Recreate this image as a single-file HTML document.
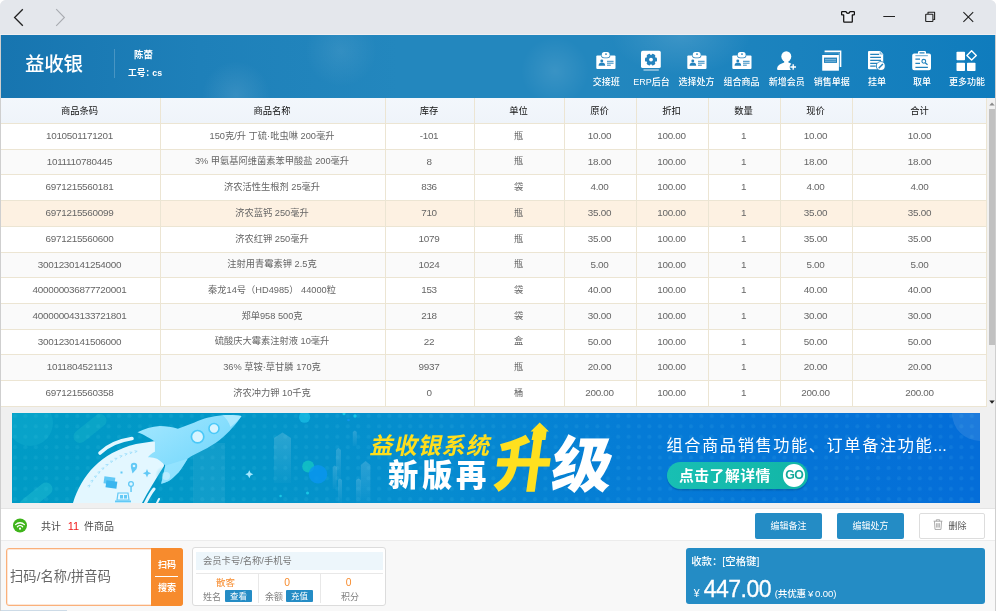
<!DOCTYPE html>
<html lang="zh-CN"><head><meta charset="utf-8"><title>益收银</title>
<style>
*{box-sizing:border-box;margin:0;padding:0}
html,body{width:997px;height:611px;overflow:hidden}
body{background:#fff;font-family:"Liberation Sans","Noto Sans CJK SC",sans-serif;position:relative;color:#666;font-size:9.3px}
.abs{position:absolute}
#win{position:absolute;left:0;top:0;width:996px;height:611px;background:#f0f0f0;border-radius:6px 6px 0 0;overflow:hidden;will-change:transform}
#tbar{position:absolute;left:0;top:0;width:996px;height:35px;background:#e4e7ec;border-bottom:1px solid #f0eff1}
#hdr{position:absolute;left:1px;top:35px;width:994px;height:63px;background:
 radial-gradient(circle 34px at 235px 60px,rgba(255,255,255,.10),rgba(255,255,255,0) 100%),
 radial-gradient(circle 36px at 340px 16px,rgba(255,255,255,.08),rgba(255,255,255,0) 100%),
 radial-gradient(circle 34px at 554px 36px,rgba(255,255,255,.10),rgba(255,255,255,0) 100%),
 radial-gradient(ellipse 70px 40px at 680px 0px,rgba(255,255,255,.13),rgba(255,255,255,0) 100%),
 linear-gradient(90deg,#1775b0 0%,#1e80b9 20%,#2387be 40%,#2387be 60%,#1a82be 80%,#0f7cbd 100%)}
.logo{position:absolute;left:24px;top:16px;color:#fff;font-size:19.5px;font-weight:500;line-height:26px;letter-spacing:-0.3px}
.vsep{position:absolute;left:113px;top:14px;width:1px;height:29px;background:rgba(255,255,255,.2)}
.uname{position:absolute;left:133px;top:13.5px;color:#fff;font-size:9.4px;line-height:12px;font-weight:700}
.uno{position:absolute;left:127px;top:32px;color:#fff;font-size:8.8px;line-height:12px;font-weight:700;white-space:nowrap}
.nav{position:absolute;top:0;width:46px;height:63px;text-align:center;color:#fff}
.nav svg{position:absolute;left:11px;top:13px;width:24px;height:24px}
.nav span{position:absolute;left:-10px;right:-10px;top:41.3px;font-size:9px;line-height:12px;white-space:nowrap;letter-spacing:0;font-weight:500}
#tbl{position:absolute;left:0;top:98px;width:995px;height:309px;background:#fff}
.thead{position:absolute;left:0;top:0;width:987px;height:26px;background:linear-gradient(#f3f7fc,#eff4fa);border-bottom:1px solid #ece5d3}
.th{position:absolute;top:0;height:25px;line-height:26.5px;text-align:center;color:#222;font-size:9.3px;border-right:1px solid #ece5d3;padding-right:2px;font-weight:400;color:#111}
.tr{position:absolute;left:0;width:987px;border-bottom:1px solid #ece5d3;background:#fff}
.tr.alt{background:#fafafa}
.tr.sel{background:#fdf1e2}
.td{position:absolute;top:0;height:100%;text-align:center;border-right:1px solid #ece5d3;white-space:nowrap;font-size:9.9px;letter-spacing:-.28px;padding-right:2px}
.td:last-child,.th:last-child{padding-right:0}
.td:nth-child(2),.td:nth-child(4){font-size:9.25px;letter-spacing:0}
#sb{position:absolute;left:987px;top:0;width:8px;height:309px;background:#f1f1f1}
#sb i{position:absolute;left:2px;top:11px;width:6px;height:236px;background:#c1c1c1}
#banner{position:absolute;left:12px;top:413px;width:968px;height:90px;overflow:hidden;background:linear-gradient(90deg,#009bc5 0%,#0396c8 25%,#068bd0 45%,#057bd6 65%,#046dd8 100%)}
#stat{position:absolute;left:1px;top:508px;width:994px;height:33px;background:#fff;border-top:1px solid #e4e4e4;border-bottom:1px solid #ececec}
#lb,#rb{position:absolute;top:35px;width:1px;height:576px;background:#cfcfcf}#lb{left:0}#rb{left:995px}
#foot{position:absolute;left:1px;top:541px;width:994px;height:70px;background:#f8f8f8}
.btn{position:absolute;top:4px;height:26px;line-height:26px;text-align:center;color:#fff;background:#248cc5;border-radius:2px;font-size:9px}
.bt1{position:absolute;left:359px;top:17.5px;font-size:23.3px;line-height:30px;font-weight:700;color:#ffde1c;letter-spacing:.8px;transform:skewX(-12deg);white-space:nowrap}
.bt2{position:absolute;left:376px;top:43px;font-size:30.3px;line-height:40px;font-weight:900;color:#fff;letter-spacing:3.7px;white-space:nowrap}
.bt3{position:absolute;left:480.5px;top:12.5px;font-size:60px;line-height:80px;font-weight:900;color:#ffe01f;transform:skewX(-8deg) scaleX(.95);white-space:nowrap}
.bt4{position:absolute;left:540px;top:13px;font-size:61px;line-height:80px;font-weight:900;color:#fff;transform:skewX(-8deg);white-space:nowrap}
.bt5{position:absolute;left:654.5px;top:20.3px;font-size:16.2px;line-height:24px;color:#fff;letter-spacing:1.6px;white-space:nowrap}
.bt6{position:absolute;left:655px;top:49px;width:141px;height:27px;border-radius:13.5px;background:linear-gradient(90deg,#18bfb3,#12b6a6);box-shadow:0 1.5px 1px rgba(0,70,130,.4)}
.bt6 span{position:absolute;left:12px;top:.6px;font-size:14.8px;line-height:26px;font-weight:700;color:#fff;letter-spacing:.5px;white-space:nowrap}
.bt6 i{position:absolute;left:116px;top:2.3px;width:22.4px;height:22.4px;border-radius:50%;background:#fff;color:#15a99b;font-style:normal;font-size:12.3px;line-height:22.4px;text-align:center;font-weight:700;letter-spacing:-.7px}
.cnt{position:absolute;left:40px;top:10px;font-size:10px;line-height:14px;color:#4a4a4a;white-space:nowrap}
.cnt b{font-weight:400;color:#f01c1c;margin:0 2px 0 4px;font-size:11px}
.btn.del{background:#fff;border:1px solid #ddd;color:#555;line-height:24px}
.btn.del svg{display:inline-block;vertical-align:-1px;margin-right:5px;margin-left:-4px}
.scan{position:absolute;left:5px;top:7px;width:177px;height:58px;background:#fff;border:1px solid #fab07a;border-radius:3px;box-shadow:inset 0 0 0 1px rgba(250,176,122,.3)}
.ph{position:absolute;left:3px;top:18px;font-size:13.2px;letter-spacing:.15px;line-height:20px;color:#666;white-space:nowrap}
.sbtn{position:absolute;left:144px;top:-1px;width:32px;height:58px;background:#f78b2d;border-radius:0 3px 3px 0;color:#fff}
.sbtn span{position:absolute;left:0;width:32px;text-align:center;font-size:9px;line-height:12px;font-weight:700}
.sbtn i{position:absolute;left:4px;top:28px;width:23px;height:1px;background:#fff}
.mem{position:absolute;left:191px;top:6px;width:194px;height:59px;background:#fff;border:1px solid #dcdcdc;border-radius:3px}
.minp{position:absolute;left:3px;top:4px;width:187px;height:18px;background:#edf6fb;font-size:9.300px;line-height:18px;padding-left:7px;color:#777}
.mh{position:absolute;left:3px;top:25px;width:187px;height:1px;background:#e8e8e8}
.mv{position:absolute;top:26px;width:1px;height:29px;background:#e8e8e8}
.mo{position:absolute;top:28.5px;text-align:center;font-size:10.3px;line-height:12px;color:#f78b2d}
.ml{position:absolute;top:43px;font-size:9px;line-height:12px;color:#808080;white-space:nowrap}
.mb{position:absolute;top:42px;width:27px;height:12px;background:#248cc5;color:#fff;font-size:8.500px;line-height:12px;text-align:center;border-radius:1px}
.pay{position:absolute;left:684.7px;top:7px;width:299.5px;height:55.5px;background:#248cc5;border-radius:3px;color:#fff}
.p1{position:absolute;left:5.5px;top:7px;font-size:10.4px;line-height:14px;white-space:nowrap;letter-spacing:0;font-weight:500}
.p2{position:absolute;left:8px;top:38.5px;font-size:10.5px;line-height:12px}
.p3{position:absolute;left:18px;top:27px;font-size:23px;line-height:28px;letter-spacing:-.5px;-webkit-text-stroke:.3px #fff}
.p4{position:absolute;left:89px;top:40px;font-size:9.6px;line-height:12px;white-space:nowrap;letter-spacing:-.15px;word-spacing:-.6px;font-weight:500}
.hsb{position:absolute;left:-1px;top:69px;width:67px;height:1px;background:#cddbe7}

</style></head><body>
<div id="win">
<div id="tbar">
<svg class="abs" style="left:0;top:0" width="995" height="35" viewBox="0 0 995 35" fill="none" stroke-linecap="butt">
<path d="M22.8 9.2 L14.6 17.5 L22.8 25.8" stroke="#222" stroke-width="1.3"/>
<path d="M56.2 9.2 L64.4 17.5 L56.2 25.8" stroke="#a8abb0" stroke-width="1.1"/>
<path d="M841.600 12.100a0.600 0.600 0 0 1 0.600-0.600h3.700c0.400 1.200 1.100 1.800 2.100 1.800s1.700-0.600 2.100-1.800h3.700a0.600 0.600 0 0 1 0.600 0.600v2.200a0.600 0.600 0 0 1-0.600 0.600h-1.500v6.700a0.600 0.600 0 0 1-0.600 0.600h-7.400a0.600 0.600 0 0 1-0.600-0.600v-6.700h-1.500a0.600 0.600 0 0 1-0.600-0.600z" stroke="#111" stroke-width="1.250" stroke-linejoin="round" fill="#eef0f4"/>
<path d="M883.3 16.5 H895" stroke="#222" stroke-width="1"/>
<rect x="925.700" y="14.200" width="7.200" height="7.300" rx="0.500" stroke="#222" stroke-width="1.100"/>
<path d="M928 13.900V12.300H934.600V19.500H933.200" stroke="#222" stroke-width="1.100" stroke-linejoin="round"/>
<path d="M963.4 12.1 L973.2 21.9 M973.2 12.1 L963.4 21.9" stroke="#222" stroke-width="1.1"/>
</svg>
</div>
<div id="hdr">
<div class="logo">益收银</div>
<div class="vsep"></div>
<div class="uname">陈蕾</div>
<div class="uno">工号：<span style="margin-left:-4.5px"> cs</span></div>
<div class="nav" style="left:582.3px"><svg viewBox="0 0 24 24"><rect x="2.300" y="7.600" width="19.200" height="13.500" rx="1" fill="#fff"/><path d="M7.100 7.600h9.200a3 2.600 0 0 1-3 2.600h-3.200a3 2.600 0 0 1-3-2.600z" fill="#2483bd"/><rect x="7.800" y="4" width="7.800" height="5.600" rx="2.500" fill="#fff"/><circle cx="12" cy="6.100" r="0.900" fill="#2483bd"/><circle cx="7.800" cy="12.900" r="1.450" fill="#2483bd"/><path d="M4.600 17.800c0-2.300 1.300-3.300 3.300-3.300s3.300 1 3.300 3.300z" fill="#2483bd"/><path d="M13 13.300h6.600M13 15.200h6.600M13 17.200h3.800" stroke="#2483bd" stroke-width="0.950"/></svg><span>交接班</span></div>
<div class="nav" style="left:627.4px"><svg viewBox="0 0 24 24"><rect x="2" y="2.800" width="19.800" height="17.300" rx="1.700" fill="#fff"/><path d="M4.500 22h15.300" stroke="rgba(255,255,255,.62)" stroke-width="1.400"/><g fill="#2483bd"><circle cx="12" cy="11.600" r="4.700"/><rect x="10" y="5.600" width="4" height="12" rx="1.200" transform="rotate(30 12 11.600)"/><rect x="10" y="5.600" width="4" height="12" rx="1.200" transform="rotate(90 12 11.600)"/><rect x="10" y="5.600" width="4" height="12" rx="1.200" transform="rotate(150 12 11.600)"/></g><circle cx="12" cy="11.600" r="1.900" fill="#fff"/></svg><span>ERP后台</span></div>
<div class="nav" style="left:672.5px"><svg viewBox="0 0 24 24"><rect x="2.300" y="7.600" width="19.200" height="13.500" rx="1" fill="#fff"/><path d="M7.100 7.600h9.200a3 2.600 0 0 1-3 2.600h-3.200a3 2.600 0 0 1-3-2.600z" fill="#2483bd"/><rect x="7.800" y="4" width="7.800" height="5.600" rx="2.500" fill="#fff"/><circle cx="12" cy="6.100" r="0.900" fill="#2483bd"/><circle cx="7.800" cy="12.900" r="1.450" fill="#2483bd"/><path d="M4.600 17.800c0-2.300 1.300-3.300 3.300-3.300s3.300 1 3.300 3.300z" fill="#2483bd"/><path d="M13 13.300h6.600M13 15.200h6.600M13 17.200h3.800" stroke="#2483bd" stroke-width="0.950"/></svg><span>选择处方</span></div>
<div class="nav" style="left:717.6px"><svg viewBox="0 0 24 24"><rect x="2.300" y="7.600" width="19.200" height="13.500" rx="1" fill="#fff"/><path d="M7.100 7.600h9.200a3 2.600 0 0 1-3 2.600h-3.200a3 2.600 0 0 1-3-2.600z" fill="#2483bd"/><rect x="7.800" y="4" width="7.800" height="5.600" rx="2.500" fill="#fff"/><circle cx="12" cy="6.100" r="0.900" fill="#2483bd"/><circle cx="7.800" cy="12.900" r="1.450" fill="#2483bd"/><path d="M4.600 17.800c0-2.300 1.300-3.300 3.300-3.300s3.300 1 3.300 3.300z" fill="#2483bd"/><path d="M13 13.300h6.600M13 15.200h6.600M13 17.200h3.800" stroke="#2483bd" stroke-width="0.950"/></svg><span>组合商品</span></div>
<div class="nav" style="left:762.7px"><svg viewBox="0 0 24 24"><ellipse cx="11.300" cy="8.500" rx="5" ry="5.200" fill="#fff"/><path fill="#fff" d="M9.200 12.500h4.200v1.900c2.300 0.700 3.400 1.400 3.400 2.600v4.900h-13.600c-0.800 0-1.300-0.600-1.100-1.500 0.400-2.200 1.600-3.500 3.500-4.300l3.600-1.700z"/><circle cx="18.200" cy="19" r="3.500" fill="#2483bd"/><path d="M15.400 19h5.600M18.200 16.200v5.600" stroke="#fff" stroke-width="1.400"/></svg><span>新增会员</span></div>
<div class="nav" style="left:807.8px"><svg viewBox="0 0 24 24"><rect x="2.200" y="7" width="16.700" height="15.700" fill="#fff"/><path d="M4.600 3.200h16v15.800" fill="none" stroke="#fff" stroke-width="1.500"/><path d="M4.500 4.800h14.600v14" fill="none" stroke="rgba(255,255,255,.35)" stroke-width="1"/><rect x="4" y="9.600" width="13" height="5.300" fill="#2483bd"/><path d="M5 11.400h11M5 13.200h11" stroke="#8fc3e2" stroke-width="0.900"/></svg><span>销售单据</span></div>
<div class="nav" style="left:852.9px"><svg viewBox="0 0 24 24"><path fill="#fff" d="M4 3h11.200l3 3v14.300a1 1 0 0 1-1 1h-13.200a1 1 0 0 1-1-1v-16.300a1 1 0 0 1 1-1z"/><path d="M15.200 3.400v2.600h2.600" fill="none" stroke="#2483bd" stroke-width="0.600"/><path d="M5.200 6.300h9M5.200 9.300h10.800M5.200 12.300h10.800M5.200 15.300h7M5.200 18.200h5.500" stroke="#2483bd" stroke-width="1.200"/><circle cx="15.800" cy="18.100" r="4.900" fill="#2483bd"/><circle cx="15.800" cy="18.100" r="4" fill="#fff"/><path d="M13.700 20.200l4.200-4.200" stroke="#2483bd" stroke-width="1.500"/></svg><span>挂单</span></div>
<div class="nav" style="left:898.0px"><svg viewBox="0 0 24 24"><path fill="#fff" d="M4.200 5.600h3.800v-1.400a1.200 1.200 0 0 1 1.200-1.200h5.600a1.200 1.200 0 0 1 1.200 1.200v1.400h3a2 2 0 0 1 2 2v12.600a2 2 0 0 1-2 2h-14.800a2 2 0 0 1-2-2v-12.600a2 2 0 0 1 2-2z"/><path d="M9.500 4.900h5" stroke="#2483bd" stroke-width="1.100"/><path d="M5.400 7.700h12.500" stroke="#2483bd" stroke-width="0.700"/><path d="M5.400 11.200h4.600M5.400 15.300h4.600M5.400 19.300h12.500" stroke="#2483bd" stroke-width="1.200"/><circle cx="13.800" cy="13.300" r="1.900" fill="none" stroke="#2483bd" stroke-width="1.100"/><path d="M15.200 14.700l2.300 2" stroke="#2483bd" stroke-width="1.300"/></svg><span>取单</span></div>
<div class="nav" style="left:943.1px"><svg viewBox="0 0 24 24"><rect x="1.500" y="3.800" width="8.500" height="8.500" rx="0.800" fill="#fff"/><rect x="1.500" y="14.700" width="8.500" height="8.300" rx="0.800" fill="#fff"/><rect x="12" y="14.700" width="8.500" height="8.300" rx="0.800" fill="#fff"/><path d="M16.600 2.700l4.700 4.700-4.700 4.700-4.700-4.700z" fill="none" stroke="#fff" stroke-width="1.400" stroke-linejoin="round"/></svg><span>更多功能</span></div>
</div>
<div id="tbl">
<div class="thead">
<div class="th" style="left:1px;width:160px">商品条码</div>
<div class="th" style="left:161px;width:225px">商品名称</div>
<div class="th" style="left:386px;width:89px">库存</div>
<div class="th" style="left:475px;width:90px">单位</div>
<div class="th" style="left:565px;width:72px">原价</div>
<div class="th" style="left:637px;width:72px">折扣</div>
<div class="th" style="left:709px;width:72px">数量</div>
<div class="th" style="left:781px;width:72px">现价</div>
<div class="th" style="left:853px;width:134px">合计</div>
</div>
<div class="tr" style="top:26px;height:26px;line-height:24.6px">
<div class="td" style="left:1px;width:160px">1010501171201</div>
<div class="td" style="left:161px;width:225px">150克/升 丁硫·吡虫啉 200毫升</div>
<div class="td" style="left:386px;width:89px">-101</div>
<div class="td" style="left:475px;width:90px">瓶</div>
<div class="td" style="left:565px;width:72px">10.00</div>
<div class="td" style="left:637px;width:72px">100.00</div>
<div class="td" style="left:709px;width:72px">1</div>
<div class="td" style="left:781px;width:72px">10.00</div>
<div class="td" style="left:853px;width:134px">10.00</div>
</div>
<div class="tr alt" style="top:52px;height:25px;line-height:23.6px">
<div class="td" style="left:1px;width:160px">1011110780445</div>
<div class="td" style="left:161px;width:225px">3% 甲氨基阿维菌素苯甲酸盐 200毫升</div>
<div class="td" style="left:386px;width:89px">8</div>
<div class="td" style="left:475px;width:90px">瓶</div>
<div class="td" style="left:565px;width:72px">18.00</div>
<div class="td" style="left:637px;width:72px">100.00</div>
<div class="td" style="left:709px;width:72px">1</div>
<div class="td" style="left:781px;width:72px">18.00</div>
<div class="td" style="left:853px;width:134px">18.00</div>
</div>
<div class="tr" style="top:77px;height:26px;line-height:24.6px">
<div class="td" style="left:1px;width:160px">6971215560181</div>
<div class="td" style="left:161px;width:225px">济农活性生根剂 25毫升</div>
<div class="td" style="left:386px;width:89px">836</div>
<div class="td" style="left:475px;width:90px">袋</div>
<div class="td" style="left:565px;width:72px">4.00</div>
<div class="td" style="left:637px;width:72px">100.00</div>
<div class="td" style="left:709px;width:72px">1</div>
<div class="td" style="left:781px;width:72px">4.00</div>
<div class="td" style="left:853px;width:134px">4.00</div>
</div>
<div class="tr alt sel" style="top:103px;height:26px;line-height:24.6px">
<div class="td" style="left:1px;width:160px">6971215560099</div>
<div class="td" style="left:161px;width:225px">济农蓝钙 250毫升</div>
<div class="td" style="left:386px;width:89px">710</div>
<div class="td" style="left:475px;width:90px">瓶</div>
<div class="td" style="left:565px;width:72px">35.00</div>
<div class="td" style="left:637px;width:72px">100.00</div>
<div class="td" style="left:709px;width:72px">1</div>
<div class="td" style="left:781px;width:72px">35.00</div>
<div class="td" style="left:853px;width:134px">35.00</div>
</div>
<div class="tr" style="top:129px;height:26px;line-height:24.6px">
<div class="td" style="left:1px;width:160px">6971215560600</div>
<div class="td" style="left:161px;width:225px">济农红钾 250毫升</div>
<div class="td" style="left:386px;width:89px">1079</div>
<div class="td" style="left:475px;width:90px">瓶</div>
<div class="td" style="left:565px;width:72px">35.00</div>
<div class="td" style="left:637px;width:72px">100.00</div>
<div class="td" style="left:709px;width:72px">1</div>
<div class="td" style="left:781px;width:72px">35.00</div>
<div class="td" style="left:853px;width:134px">35.00</div>
</div>
<div class="tr alt" style="top:155px;height:25px;line-height:23.6px">
<div class="td" style="left:1px;width:160px">3001230141254000</div>
<div class="td" style="left:161px;width:225px">注射用青霉素钾 2.5克</div>
<div class="td" style="left:386px;width:89px">1024</div>
<div class="td" style="left:475px;width:90px">瓶</div>
<div class="td" style="left:565px;width:72px">5.00</div>
<div class="td" style="left:637px;width:72px">100.00</div>
<div class="td" style="left:709px;width:72px">1</div>
<div class="td" style="left:781px;width:72px">5.00</div>
<div class="td" style="left:853px;width:134px">5.00</div>
</div>
<div class="tr" style="top:180px;height:26px;line-height:24.6px">
<div class="td" style="left:1px;width:160px">400000036877720001</div>
<div class="td" style="left:161px;width:225px">秦龙14号（HD4985） 44000粒</div>
<div class="td" style="left:386px;width:89px">153</div>
<div class="td" style="left:475px;width:90px">袋</div>
<div class="td" style="left:565px;width:72px">40.00</div>
<div class="td" style="left:637px;width:72px">100.00</div>
<div class="td" style="left:709px;width:72px">1</div>
<div class="td" style="left:781px;width:72px">40.00</div>
<div class="td" style="left:853px;width:134px">40.00</div>
</div>
<div class="tr alt" style="top:206px;height:26px;line-height:24.6px">
<div class="td" style="left:1px;width:160px">400000043133721801</div>
<div class="td" style="left:161px;width:225px">郑单958 500克</div>
<div class="td" style="left:386px;width:89px">218</div>
<div class="td" style="left:475px;width:90px">袋</div>
<div class="td" style="left:565px;width:72px">30.00</div>
<div class="td" style="left:637px;width:72px">100.00</div>
<div class="td" style="left:709px;width:72px">1</div>
<div class="td" style="left:781px;width:72px">30.00</div>
<div class="td" style="left:853px;width:134px">30.00</div>
</div>
<div class="tr" style="top:232px;height:25px;line-height:23.6px">
<div class="td" style="left:1px;width:160px">3001230141506000</div>
<div class="td" style="left:161px;width:225px">硫酸庆大霉素注射液 10毫升</div>
<div class="td" style="left:386px;width:89px">22</div>
<div class="td" style="left:475px;width:90px">盒</div>
<div class="td" style="left:565px;width:72px">50.00</div>
<div class="td" style="left:637px;width:72px">100.00</div>
<div class="td" style="left:709px;width:72px">1</div>
<div class="td" style="left:781px;width:72px">50.00</div>
<div class="td" style="left:853px;width:134px">50.00</div>
</div>
<div class="tr alt" style="top:257px;height:26px;line-height:24.6px">
<div class="td" style="left:1px;width:160px">1011804521113</div>
<div class="td" style="left:161px;width:225px">36% 草铵·草甘膦 170克</div>
<div class="td" style="left:386px;width:89px">9937</div>
<div class="td" style="left:475px;width:90px">瓶</div>
<div class="td" style="left:565px;width:72px">20.00</div>
<div class="td" style="left:637px;width:72px">100.00</div>
<div class="td" style="left:709px;width:72px">1</div>
<div class="td" style="left:781px;width:72px">20.00</div>
<div class="td" style="left:853px;width:134px">20.00</div>
</div>
<div class="tr" style="top:283px;height:26px;line-height:24.6px">
<div class="td" style="left:1px;width:160px">6971215560358</div>
<div class="td" style="left:161px;width:225px">济农冲力钾 10千克</div>
<div class="td" style="left:386px;width:89px">0</div>
<div class="td" style="left:475px;width:90px">桶</div>
<div class="td" style="left:565px;width:72px">200.00</div>
<div class="td" style="left:637px;width:72px">100.00</div>
<div class="td" style="left:709px;width:72px">1</div>
<div class="td" style="left:781px;width:72px">200.00</div>
<div class="td" style="left:853px;width:134px">200.00</div>
</div>
<div id="sb"><i></i>
<svg class="abs" style="left:0;top:0" width="8" height="309"><path d="M2.300 7.500 L5 4.500 L7.700 7.500z" fill="#8a8a8a"/><path d="M2.300 302.500 L5 305.800 L7.700 302.500z" fill="#222"/></svg>
</div>
</div>
<div id="banner">
<svg class="abs" style="left:0;top:0" width="968" height="90" viewBox="0 0 968 90">
<defs>
<pattern id="dots" width="10.4" height="10.4" patternUnits="userSpaceOnUse"><circle cx="3" cy="3" r="2" fill="rgba(140,235,255,.075)"/></pattern>
<linearGradient id="rk" x1="0" y1="0" x2="1" y2="1"><stop offset="0" stop-color="#a6e8ff"/><stop offset="1" stop-color="#63d2fb"/></linearGradient>
<radialGradient id="glow" cx="0.5" cy="0.5" r="0.5"><stop offset="0" stop-color="rgba(40,190,230,.55)"/><stop offset="1" stop-color="rgba(40,190,230,0)"/></radialGradient>
</defs>
<rect width="968" height="90" fill="url(#dots)"/>
<circle cx="18" cy="10" r="23" fill="rgba(60,210,230,.14)"/>
<path d="M68 23.500 L88 7.500" stroke="rgba(60,220,210,.17)" stroke-width="13" stroke-linecap="round"/>
<path d="M14 92 L34 76" stroke="rgba(60,220,220,.25)" stroke-width="13" stroke-linecap="round"/>
<defs><linearGradient id="bld" x1="0" y1="0" x2="0" y2="1"><stop offset="0" stop-color="rgba(255,255,255,.16)"/><stop offset="1" stop-color="rgba(255,255,255,.02)"/></linearGradient></defs>
<rect x="181" y="30" width="32" height="60" fill="rgba(255,255,255,.06)"/>
<g fill="url(#bld)">
<path d="M262 25l8.500-5.500 8.500 5.500v45h-17z"/><path d="M348.800 52l4.800-4 4.800 4v38h-9.600z"/><path d="M324 37l2.500-2 2.500 2v30h-5z"/><path d="M320.700 54l2-1.500 2 1.500v22h-4z"/><path d="M326 67l2-1.500 2 1.500v23h-4z"/><path d="M344 67l2.500-1.500 2.500 1.500v23h-5z"/><path d="M340.800 19l2-1.500 2 1.500v14h-4z"/>
</g>
<circle cx="292.600" cy="4.200" r="5.600" fill="rgba(30,200,235,.6)"/><circle cx="296.200" cy="53.500" r="6" fill="rgba(20,200,195,.75)"/><circle cx="306" cy="61.200" r="9.200" fill="rgba(10,150,240,.8)"/>
<g fill="rgba(30,210,235,.8)"><circle cx="332" cy="0.800" r="1.500"/><circle cx="343" cy="3" r="1.700"/><circle cx="336.500" cy="7" r="1.300" fill="rgba(20,150,240,.8)"/><circle cx="295.500" cy="80" r="1.500"/><circle cx="268.600" cy="83" r="1.300"/></g>
<path d="M237.300 57.200l1.300 2.700 2.700 1.300-2.700 1.300-1.300 2.700-1.300-2.700-2.700-1.300 2.700-1.300z" fill="#a5e8ff"/>
<!-- swoosh -->
<path d="M61 90 C70 62 88 40 124 31 L150 27 L152 53 C144 66 136 78 130 90Z" fill="#e3f7ff"/>
<path d="M88 40 C96 32 107 27.500 120 25.500" fill="none" stroke="#e3f7ff" stroke-width="3.600" stroke-linecap="round"/>
<path d="M142 76 C138 81 136 85 133.500 90" fill="none" stroke="#e3f7ff" stroke-width="3" stroke-linecap="round"/>
<path d="M147 86 L145 90" fill="none" stroke="#e3f7ff" stroke-width="2" stroke-linecap="round"/>
<!-- little icons in swoosh -->
<g fill="#62c9f6">
<rect x="92" y="64" width="11" height="7" transform="rotate(8 97 67)"/><rect x="94" y="68" width="11" height="7" transform="rotate(8 99 71)" fill="#3bb6ef"/>
<circle cx="122" cy="53" r="3.200"/><path d="M119 54.500l1.500 6 4.500-5z"/>
<circle cx="119" cy="71" r="3"/><rect x="118.300" y="73" width="1.500" height="6"/>
<path d="M135 56l1.200 3 3 1.200-3 1.200-1.200 3-1.200-3-3-1.200 3-1.200z"/>
<rect x="108.500" y="58.500" width="2" height="2"/>
<path d="M106 80h10l1 7h-12z" fill="none" stroke="#62c9f6" stroke-width="1.200"/><rect x="103" y="87.500" width="16" height="1.800"/>
<rect x="108" y="82" width="3" height="3.500"/><rect x="112" y="82" width="3" height="3.500"/>
</g>
<circle cx="122" cy="53" r="1.300" fill="#e3f7ff"/><circle cx="119" cy="71" r="1.700" fill="#e3f7ff"/>
<g fill="none" stroke="#9fdffa" stroke-width="0.900" transform="translate(-1.500,-4)">
<path d="M77 77l2.500-1-1 2.500M80 72l2.500-0.800-1.200 2.400M83.500 67.500l2.500-0.700-1.300 2.300M87 63.200l2.600-0.500-1.500 2.200M91 59.300l2.600-0.400-1.600 2.100M95 55.600l2.700-0.200-1.800 2M99.500 52.200l2.700-0.100-1.900 1.900M104 49.300l2.700 0-2 1.800M109 46.700l2.700 0.200-2.100 1.700M114 44.600l2.700 0.300-2.200 1.600M119 43l2.700 0.400-2.300 1.500M124 41.700l2.700 0.600-2.400 1.300"/>
</g>
<circle cx="152" cy="62" r="9" fill="url(#glow)"/>
<!-- rocket -->
<path d="M229.500 3 C222 1.500 214 1.800 210.400 2.300 C205 3 200 3.800 196.400 4.600 C191 6 187 7.800 182.500 9.500 L165.900 15.800 C160 14 154 13 147.800 13 C140 13.500 132 16 125.500 19.300 C129 20.500 132 22 135.300 24.100 C138 25.500 141 27 142.900 29 L142.900 38.700 C140 40 137.500 42 135.900 44.300 C139 44 142 44.500 145 45.700 C148 47.500 151 50 153.300 52.600 L149.200 70.700 C153 70 156 68.500 158.900 66.500 C162.500 63.500 166 60.500 168.600 56.800 C171 53 173.500 49.500 175.600 45.700 C180 42.500 186 40 190.900 37.300 C197 34 203 30.500 207.600 26.900 C212 23.500 216.500 19.500 220.100 15.100 C224 11 227 7 229.500 3Z" fill="url(#rk)"/>
<path d="M229.500 3 C222 1.500 214 1.800 210.400 2.300 C214 5 217 9 218.500 14 C223 10.500 227 6.500 229.500 3Z" fill="#b5ecff" opacity=".8"/>
<path d="M153.300 52.600 L149.200 70.700 C153 70 156 68.500 158.900 66.500 C162.500 63.500 166 60.500 168.600 56.800 C171 53 173.500 49.500 175.600 45.700 C168 48 160 50.500 153.300 52.600Z" fill="#9ae6ff" opacity=".7"/>
<circle cx="154" cy="63" r="4" fill="rgba(255,255,255,.35)"/>
<circle cx="185.600" cy="23.700" r="6.200" fill="#d7f4ff" stroke="#4cc9f8" stroke-width="1.700"/>
<circle cx="202" cy="15.500" r="5" fill="#d7f4ff" stroke="#4cc9f8" stroke-width="1.600"/>
<!-- corner -->
<circle cx="968" cy="0" r="28" fill="rgba(255,255,255,.10)"/>
<!-- arrow of 升 -->
</svg>
<div class="bt1">益收银系统</div>
<div class="bt2">新版再</div>
<div class="bt3">升</div>
<svg class="abs" style="left:0;top:0" width="968" height="90" viewBox="0 0 968 90"><path d="M527.700 9.400 L537 18.600 L534.600 18.600 L533.500 27 L519.500 27 L521.300 18.600 L518.600 18.600Z" fill="#ffe01f"/></svg>
<div class="bt4">级</div>
<div class="bt5">组合商品销售功能、订单备注功能<span style="letter-spacing:0">...</span></div>
<div class="bt6"><span>点击了解详情</span><i>GO</i></div>

</div>
<div id="stat">
<svg class="abs" style="left:11px;top:9px" width="16" height="16" viewBox="0 0 16 16"><circle cx="8" cy="7.500" r="7" fill="#3fb41b"/><g fill="none" stroke="#fff" stroke-width="1.300" stroke-linecap="round"><path d="M3.600 6.600a6.200 6.200 0 0 1 8.800 0"/><path d="M5.400 8.700a3.700 3.700 0 0 1 5.200 0"/></g><circle cx="8" cy="10.700" r="1.100" fill="#fff"/></svg>
<div class="cnt">共计 <b>11</b> 件商品</div>
<div class="btn" style="left:754px;width:67px">编辑备注</div>
<div class="btn" style="left:836px;width:67px">编辑处方</div>
<div class="btn del" style="left:918px;width:66px"><svg width="10" height="11" viewBox="0 0 9 10" fill="none" stroke="#a4a4a4" stroke-width="0.850"><path d="M0.500 2h8M3 2v-1.300h3v1.300M1.300 2l0.500 7.500h5.400l0.500-7.500M3.300 3.800v4M4.500 3.800v4M5.700 3.800v4"/></svg>删除</div>

</div>
<div id="foot">
<div class="scan"><div class="ph">扫码/名称/拼音码</div><div class="sbtn"><span style="top:11px">扫码</span><i></i><span style="top:34px">搜索</span></div></div>
<div class="mem">
<div class="minp">会员卡号/名称/手机号</div>
<div class="mh"></div><div class="mv" style="left:65px"></div><div class="mv" style="left:127px"></div>
<div class="mo" style="left:2px;width:61px;font-size:9.5px">散客</div>
<div class="mo" style="left:66px;width:56px">0</div>
<div class="mo" style="left:128px;width:55px">0</div>
<div class="ml" style="left:10px">姓名</div><div class="mb" style="left:32px">查看</div>
<div class="ml" style="left:72px">余额</div><div class="mb" style="left:93px">充值</div>
<div class="ml" style="left:148px">积分</div>
</div>
<div class="pay">
<div class="p1">收款：[空格键]</div>
<div class="p2">¥</div>
<div class="p3">447.00</div>
<div class="p4">(共优惠 ¥ 0.00)</div>
</div>
<div class="hsb"></div>

</div>
<div id="lb"></div><div id="rb"></div>
</div>
</body></html>
